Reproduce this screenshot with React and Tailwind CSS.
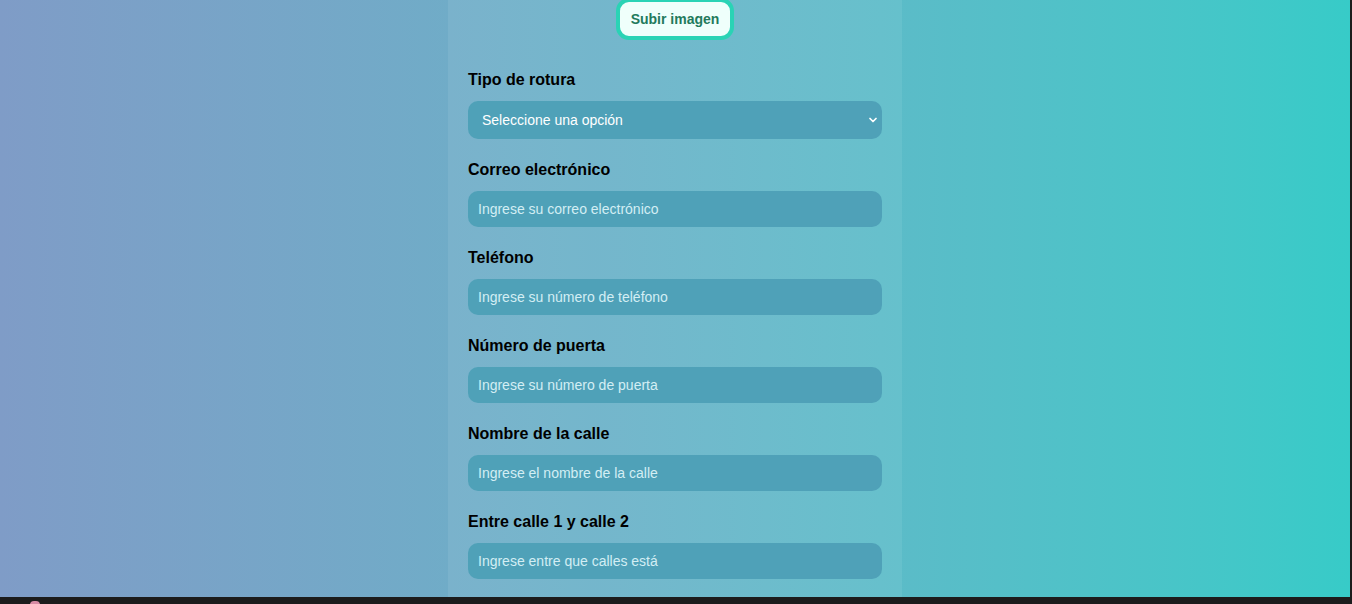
import { ChevronDown } from "lucide-react";

const FIELDS = [
  { label: "Correo electrónico", placeholder: "Ingrese su correo electrónico" },
  { label: "Teléfono", placeholder: "Ingrese su número de teléfono" },
  { label: "Número de puerta", placeholder: "Ingrese su número de puerta" },
  { label: "Nombre de la calle", placeholder: "Ingrese el nombre de la calle" },
  { label: "Entre calle 1 y calle 2", placeholder: "Ingrese entre que calles está" },
];

export default function App() {
  return (
    <div className="h-[604px] w-[1352px] overflow-hidden bg-[#1c1c1c] font-['Liberation_Sans',Arial,sans-serif]">
      <div className="flex h-[597px]">
        <div className="flex flex-1 justify-center bg-gradient-to-r from-[#7f9cc7] to-[#37cbc8]">
          <div className="w-[454px] bg-white/[0.07] px-5">
            {/* Upload button */}
            <div className="-mt-[2px] flex justify-center">
              <button className="h-[42px] w-[118px] rounded-[13px] border-4 border-[#2ad3b5] bg-[#effffb] text-[14px] font-bold text-[#227a5c]">
                Subir imagen
              </button>
            </div>

            <div className="mt-[31px]">
              <label className="block text-[16px] font-bold leading-[18px] text-black">Tipo de rotura</label>
              <div className="relative mt-[12px]">
                <select className="h-[38px] w-full appearance-none rounded-[10px] bg-[#4fa1b8] pl-[14px] text-[14px] text-white outline-none">
                  <option>Seleccione una opción</option>
                </select>
                <ChevronDown className="pointer-events-none absolute right-[3px] top-1/2 h-[12px] w-[12px] -translate-y-1/2 text-white" strokeWidth={3.5} />
              </div>
            </div>

            {FIELDS.map((f) => (
              <div key={f.label} className="mt-[22px]">
                <label className="block text-[16px] font-bold leading-[18px] text-black">{f.label}</label>
                <input
                  placeholder={f.placeholder}
                  className="mt-[12px] h-[36px] w-full rounded-[10px] bg-[#4fa1b8] px-[10px] text-[14px] text-white outline-none placeholder:text-[#d3eef4]"
                />
              </div>
            ))}
          </div>
        </div>
        <div className="w-[2px] bg-[#1c1c1c]" />
      </div>
      <div className="relative h-[7px]">
        <div className="absolute left-[30px] top-[4px] h-[8px] w-[10px] rounded-full bg-[#d78aa4]" />
      </div>
    </div>
  );
}
